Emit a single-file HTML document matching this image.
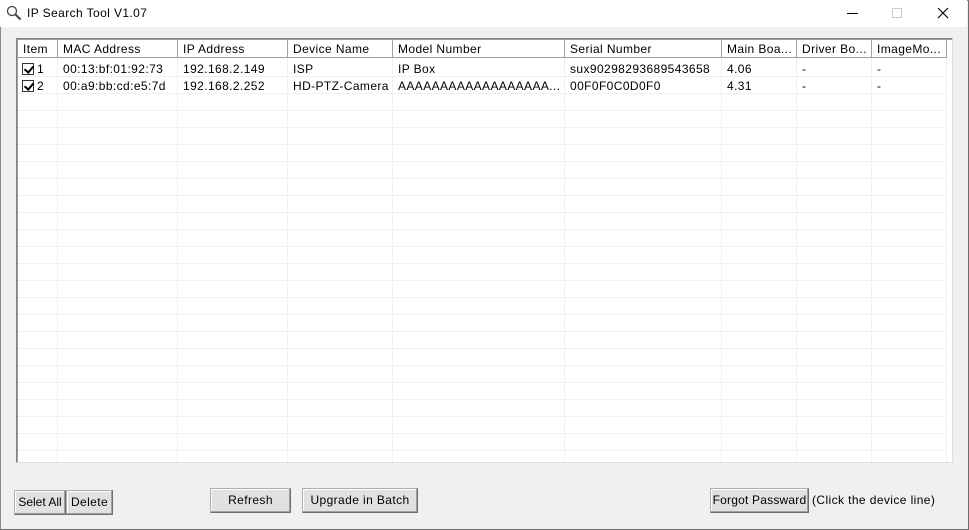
<!DOCTYPE html>
<html><head><style>
*{margin:0;padding:0;box-sizing:border-box}
body{width:969px;height:530px;overflow:hidden;background:#f0f0f0;font-family:"Liberation Sans",Tahoma,sans-serif;font-size:12px;letter-spacing:0.4px;color:#000;position:relative}
.win{position:absolute;left:0;top:0;width:969px;height:530px;border:1px solid #8a8a8a;border-right-color:#6e6e6e;border-bottom-color:#6e6e6e}
.title{position:absolute;left:0;top:0;width:967px;height:27px;background:#fff}
.title span{position:absolute;left:27px;top:6px;font-size:12px}
.a{position:absolute}
.lv{position:absolute;left:16px;top:38px;width:937px;height:425px;background:#fff;border:1px solid #828282;border-right-color:#e0e0e0;border-bottom-color:#e0e0e0;box-shadow:inset 1px 1px 0 #a0a0a0;overflow:hidden}
.hd{position:absolute;top:1px;height:18px;border-right:1px solid #a0a0a0;border-bottom:1px solid #a0a0a0;background:#fff;padding:2px 0 0 5px;white-space:nowrap;overflow:hidden}
.vl{position:absolute;top:19px;width:1px;height:410px;background:#f0f0f0}
.hl{position:absolute;left:1px;width:928px;height:1px;background:#f0f0f0}
.c{position:absolute;white-space:nowrap}
.cb{position:absolute;width:12px;height:12px;border:1px solid #333;background:#fff}
.cb:after{content:"";position:absolute;left:3px;top:0px;width:4px;height:7px;border:solid #000;border-width:0 2px 2px 0;transform:rotate(40deg)}
.btn{position:absolute;height:25px;background:#e1e1e1;border:1px solid #adadad;border-right-color:#6e6e6e;border-bottom-color:#6e6e6e;box-shadow:inset -1px -1px 0 #a0a0a0,inset 1px 1px 0 #fff;text-align:center;line-height:22px;font-size:12px;white-space:nowrap}
</style></head><body>
<div class="win"></div>
<div class="title">
<svg class="a" style="left:6px;top:5px" width="16" height="16"><circle cx="6" cy="6" r="4.5" fill="none" stroke="#444" stroke-width="1.3"/><line x1="9.5" y1="9.5" x2="14.5" y2="14.5" stroke="#444" stroke-width="2"/></svg>
<span>IP Search Tool V1.07</span>
<div class="a" style="left:847px;top:13px;width:11px;height:1px;background:#000"></div>
<div class="a" style="left:892px;top:8px;width:10px;height:10px;border:1px solid #ccc"></div>
<svg class="a" style="left:937px;top:7px" width="12" height="12"><path d="M1 1L11 11M11 1L1 11" stroke="#000" stroke-width="1.1"/></svg>
</div>
<div class="lv">
<div class="hd" style="left:1px;width:40px">Item</div>
<div class="hd" style="left:41px;width:120px">MAC Address</div>
<div class="hd" style="left:161px;width:110px">IP Address</div>
<div class="hd" style="left:271px;width:105px">Device Name</div>
<div class="hd" style="left:376px;width:172px">Model Number</div>
<div class="hd" style="left:548px;width:157px">Serial Number</div>
<div class="hd" style="left:705px;width:75px">Main Boa...</div>
<div class="hd" style="left:780px;width:75px">Driver Bo...</div>
<div class="hd" style="left:855px;width:75px">ImageMo...</div>
<div class="vl" style="left:40px"></div><div class="vl" style="left:160px"></div><div class="vl" style="left:270px"></div><div class="vl" style="left:375px"></div><div class="vl" style="left:547px"></div><div class="vl" style="left:704px"></div><div class="vl" style="left:779px"></div><div class="vl" style="left:854px"></div><div class="vl" style="left:929px"></div>
<div class="hl" style="top:37px"></div><div class="hl" style="top:54px"></div><div class="hl" style="top:71px"></div><div class="hl" style="top:88px"></div><div class="hl" style="top:105px"></div><div class="hl" style="top:122px"></div><div class="hl" style="top:139px"></div><div class="hl" style="top:156px"></div><div class="hl" style="top:173px"></div><div class="hl" style="top:190px"></div><div class="hl" style="top:207px"></div><div class="hl" style="top:224px"></div><div class="hl" style="top:241px"></div><div class="hl" style="top:258px"></div><div class="hl" style="top:275px"></div><div class="hl" style="top:292px"></div><div class="hl" style="top:309px"></div><div class="hl" style="top:326px"></div><div class="hl" style="top:343px"></div><div class="hl" style="top:360px"></div><div class="hl" style="top:377px"></div><div class="hl" style="top:394px"></div><div class="hl" style="top:411px"></div>
<div class="cb" style="left:5px;top:24px"></div><div class="c" style="left:20px;top:23px">1</div>
<div class="c" style="left:46px;top:23px">00:13:bf:01:92:73</div>
<div class="c" style="left:166px;top:23px">192.168.2.149</div>
<div class="c" style="left:276px;top:23px">ISP</div>
<div class="c" style="left:381px;top:23px">IP Box</div>
<div class="c" style="left:553px;top:23px">sux90298293689543658</div>
<div class="c" style="left:710px;top:23px">4.06</div>
<div class="c" style="left:785px;top:23px">-</div>
<div class="c" style="left:860px;top:23px">-</div>
<div class="cb" style="left:5px;top:41px"></div><div class="c" style="left:20px;top:40px">2</div>
<div class="c" style="left:46px;top:40px">00:a9:bb:cd:e5:7d</div>
<div class="c" style="left:166px;top:40px">192.168.2.252</div>
<div class="c" style="left:276px;top:40px">HD-PTZ-Camera</div>
<div class="c" style="left:381px;top:40px">AAAAAAAAAAAAAAAAAA...</div>
<div class="c" style="left:553px;top:40px">00F0F0C0D0F0</div>
<div class="c" style="left:710px;top:40px">4.31</div>
<div class="c" style="left:785px;top:40px">-</div>
<div class="c" style="left:860px;top:40px">-</div>
</div>
<div class="btn" style="left:14px;top:490px;width:52px;letter-spacing:0">Selet All</div>
<div class="btn" style="left:66px;top:490px;width:47px">Delete</div>
<div class="btn" style="left:210px;top:488px;width:81px">Refresh</div>
<div class="btn" style="left:302px;top:488px;width:116px">Upgrade in Batch</div>
<div class="btn" style="left:710px;top:488px;width:99px;letter-spacing:0.2px">Forgot Passward</div>
<div class="c" style="left:812px;top:493px">(Click the device line)</div>
</body></html>
